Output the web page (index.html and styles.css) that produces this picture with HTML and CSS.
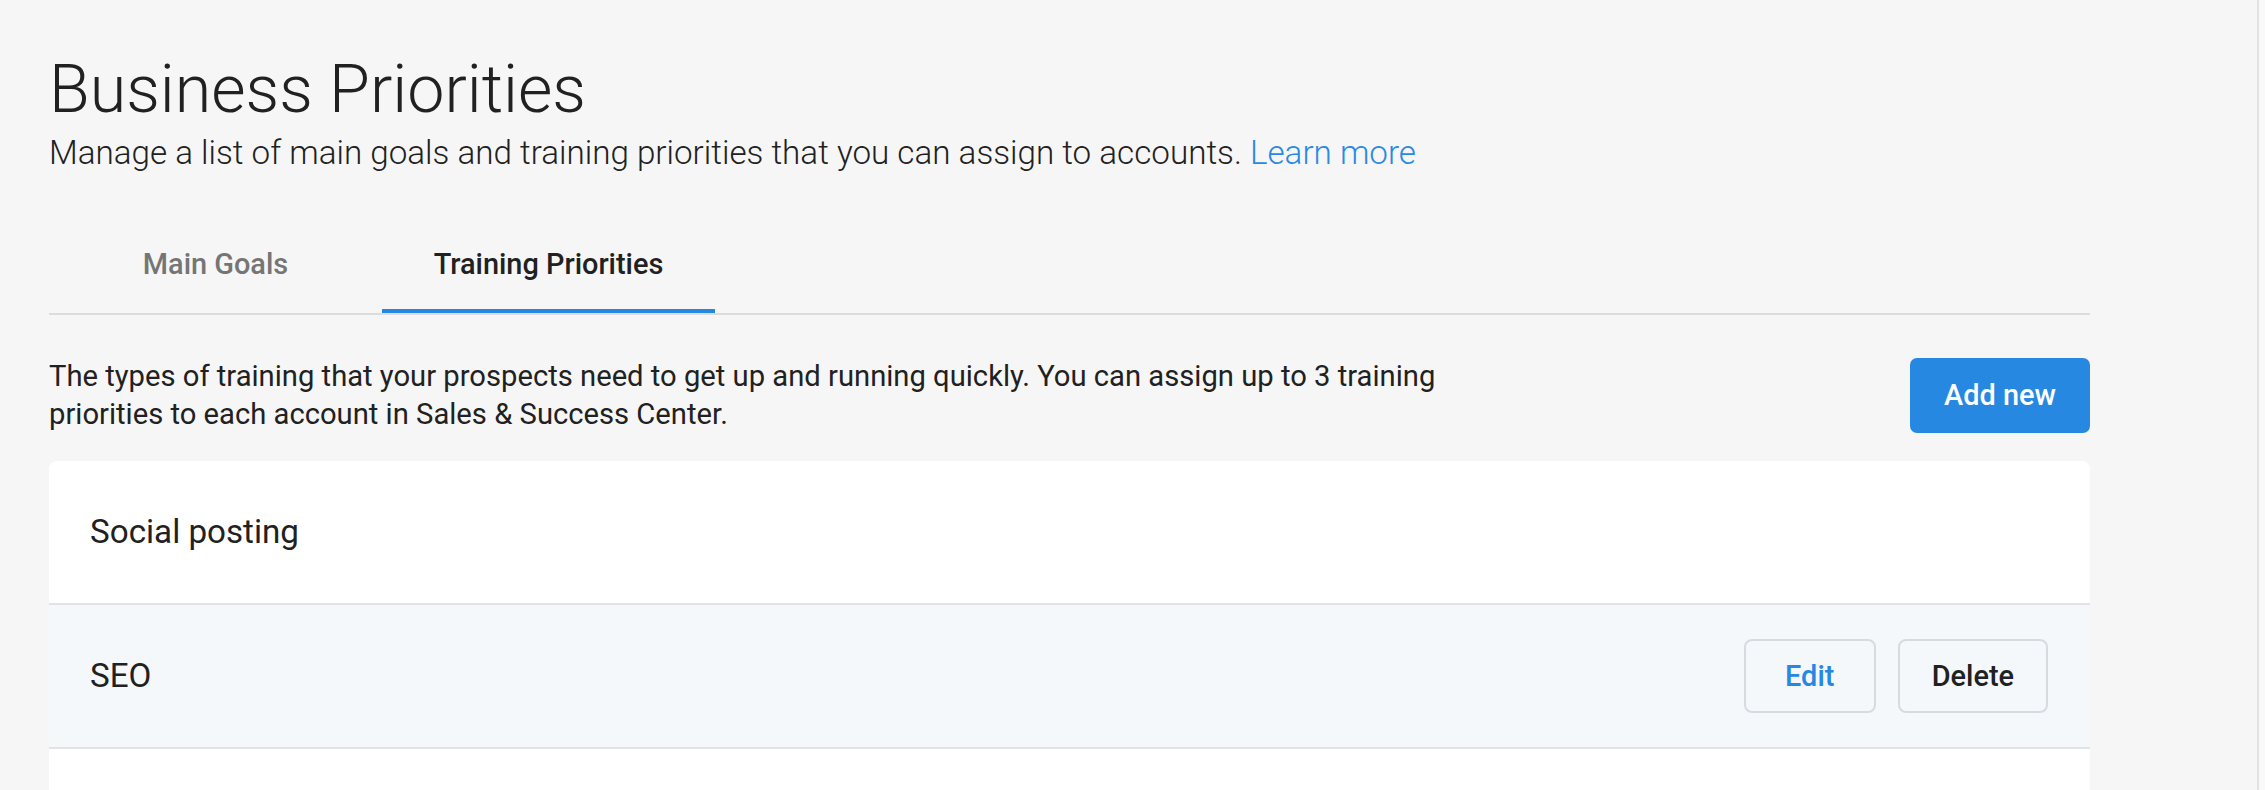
FILE: index.html
```html
<!DOCTYPE html>
<html lang="en">
<head>
<meta charset="utf-8">
<title>Business Priorities</title>
<link rel="stylesheet" href="styles.css">
</head>
<body>
<div class="frame">
  <main class="page">
    <h1 class="title">Business Priorities</h1>
    <p class="subtitle">Manage a list of main goals and training priorities that you can assign to accounts. <a class="link" href="#">Learn more</a></p>
    <nav class="tabs">
      <div class="tab">Main Goals</div>
      <div class="tab tab-active">Training Priorities</div>
    </nav>
    <section class="intro">
      <p class="intro-text">The types of training that your prospects need to get up and running quickly. You can assign up to 3 training priorities to each account in Sales &amp; Success Center.</p>
      <button class="btn btn-primary">Add new</button>
    </section>
    <section class="card">
      <div class="row">
        <span class="row-label">Social posting</span>
      </div>
      <div class="row row-hover">
        <span class="row-label">SEO</span>
        <div class="row-actions">
          <button class="btn btn-outline btn-edit">Edit</button>
          <button class="btn btn-outline btn-delete">Delete</button>
        </div>
      </div>
      <div class="row row-empty"></div>
    </section>
  </main>
  <div class="scroll-track"></div>
</div>
</body>
</html>
```

FILE: styles.css
```css
* {
  box-sizing: border-box;
}

html, body {
  margin: 0;
  padding: 0;
  height: 100%;
  overflow: hidden;
}

body {
  background: #f6f6f6;
  font-family: Roboto, "Noto Sans", "Liberation Sans", sans-serif;
  color: #212121;
}

.frame {
  display: flex;
  height: 790px;
}

.page {
  flex: 1;
  padding: 50px 0 0 49px;
}

.scroll-track {
  width: 8px;
  background: #f9f9f9;
  border-left: 2px solid #e2e2e2;
}

.title {
  margin: 0;
  font-size: 66.4px;
  line-height: 78px;
  font-weight: 300;
}

.subtitle {
  margin: 5px 0 0;
  font-size: 33.2px;
  line-height: 40px;
  font-weight: 300;
}

.link {
  color: #2a8ae3;
  text-decoration: none;
}

.tabs {
  display: flex;
  width: 2041px;
  margin-top: 46px;
  border-bottom: 2px solid #dcdcdc;
}

.tab {
  width: 333px;
  padding: 28px 0;
  line-height: 34px;
  font-size: 28.9px;
  font-weight: 500;
  text-align: center;
  color: #757575;
  border-bottom: 4px solid transparent;
}

.tab-active {
  color: #212121;
  border-bottom-color: #2788e2;
}

.intro {
  display: flex;
  justify-content: space-between;
  align-items: center;
  width: 2041px;
  margin-top: 42px;
}

.intro-text {
  margin: 0;
  width: 1440px;
  font-size: 29.2px;
  line-height: 38px;
}

.btn {
  display: inline-flex;
  align-items: center;
  justify-content: center;
  font-family: Roboto, "Noto Sans", "Liberation Sans", sans-serif;
  font-size: 28.9px;
  font-weight: 500;
  border-radius: 7px;
  padding: 0 34px;
  cursor: pointer;
}

.btn-primary {
  height: 75px;
  background: #2788e2;
  color: #ffffff;
  border: none;
}

.card {
  width: 2041px;
  margin-top: 28px;
  background: #ffffff;
  border-radius: 8px 8px 0 0;
  overflow: hidden;
}

.row {
  display: flex;
  align-items: center;
  justify-content: space-between;
  height: 144px;
  padding: 0 42px 0 41px;
  border-bottom: 2px solid #e1e3e6;
}

.row-hover {
  background: #f5f8fb;
}

.row-label {
  font-size: 33.2px;
  line-height: 40px;
}

.row-actions {
  display: flex;
  gap: 22px;
}

.btn-outline {
  height: 74px;
  padding: 0 32px;
  background: transparent;
  border: 2px solid #d7dbe0;
  border-radius: 8px;
}

.btn-edit {
  min-width: 132px;
  color: #2788e2;
}

.btn-delete {
  color: #212121;
}
```
